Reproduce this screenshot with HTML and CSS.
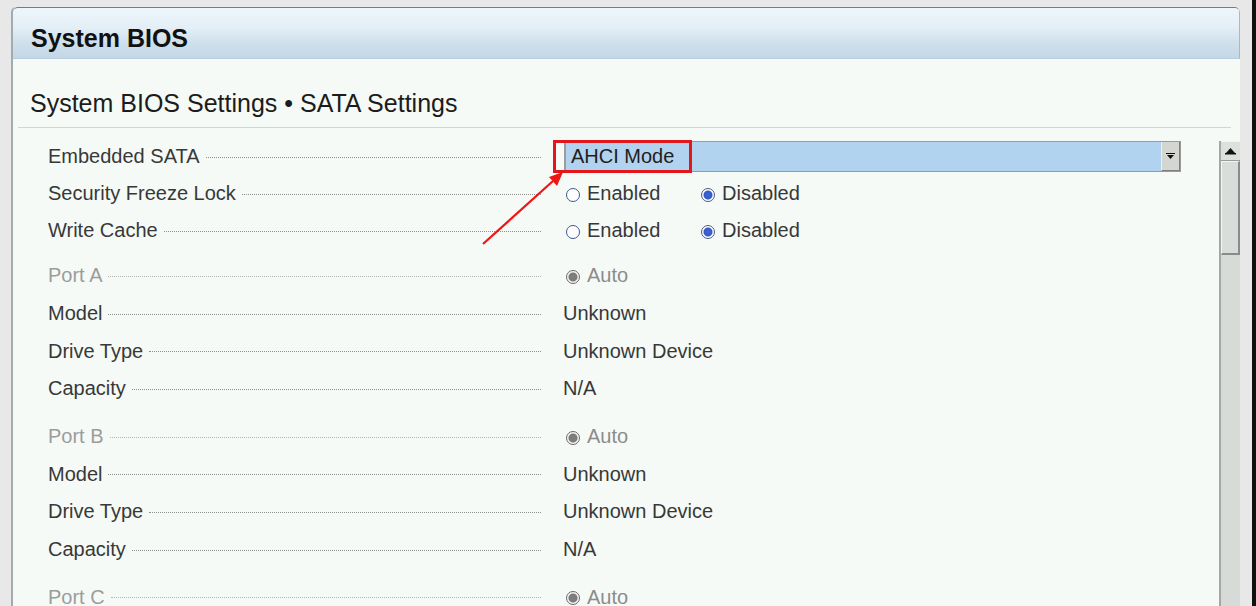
FILE: index.html
```html
<!DOCTYPE html>
<html>
<head>
<meta charset="utf-8">
<link rel="stylesheet" href="styles.css">
</head>
<body>
<div class="screen">
  <div class="frame">
    <div class="panel">
      <div class="panel-head">System BIOS</div>
      <div class="panel-body">
        <div class="subtitle">System BIOS Settings • SATA Settings</div>
        <div class="content">
          <div class="rows">
            <div class="group g-first">
              <div class="row">
                <div class="label"><span>Embedded SATA</span><i class="leader"></i></div>
                <div class="value">
                  <div class="select">
                    <span class="select-text">AHCI Mode</span>
                    <span class="select-btn"><svg width="9" height="7" viewBox="0 0 9 7"><rect x="0" y="0" width="9" height="1" fill="#111"/><polygon points="1,2 8,2 4.5,6" fill="#111"/></svg></span>
                  </div>
                </div>
              </div>
              <div class="row">
                <div class="label"><span>Security Freeze Lock</span><i class="leader"></i></div>
                <div class="value">
                  <span class="radio"><span class="circle"></span>Enabled</span>
                  <span class="radio"><span class="circle on"></span>Disabled</span>
                </div>
              </div>
              <div class="row">
                <div class="label"><span>Write Cache</span><i class="leader"></i></div>
                <div class="value">
                  <span class="radio"><span class="circle"></span>Enabled</span>
                  <span class="radio"><span class="circle on"></span>Disabled</span>
                </div>
              </div>
            </div>

            <div class="group port">
              <div class="row dim">
                <div class="label"><span>Port A</span><i class="leader"></i></div>
                <div class="value"><span class="radio"><span class="circle off"></span>Auto</span></div>
              </div>
              <div class="row">
                <div class="label"><span>Model</span><i class="leader"></i></div>
                <div class="value">Unknown</div>
              </div>
              <div class="row">
                <div class="label"><span>Drive Type</span><i class="leader"></i></div>
                <div class="value">Unknown Device</div>
              </div>
              <div class="row">
                <div class="label"><span>Capacity</span><i class="leader"></i></div>
                <div class="value">N/A</div>
              </div>
            </div>

            <div class="group port">
              <div class="row dim">
                <div class="label"><span>Port B</span><i class="leader"></i></div>
                <div class="value"><span class="radio"><span class="circle off"></span>Auto</span></div>
              </div>
              <div class="row">
                <div class="label"><span>Model</span><i class="leader"></i></div>
                <div class="value">Unknown</div>
              </div>
              <div class="row">
                <div class="label"><span>Drive Type</span><i class="leader"></i></div>
                <div class="value">Unknown Device</div>
              </div>
              <div class="row">
                <div class="label"><span>Capacity</span><i class="leader"></i></div>
                <div class="value">N/A</div>
              </div>
            </div>

            <div class="group port">
              <div class="row dim">
                <div class="label"><span>Port C</span><i class="leader"></i></div>
                <div class="value"><span class="radio"><span class="circle off"></span>Auto</span></div>
              </div>
            </div>
          </div>
          <div class="scrollbar">
            <div class="sb-btn"><svg width="11" height="7" viewBox="0 0 11 7"><polygon points="5.5,0 10,5 1,5" fill="#111"/><rect x="0" y="5" width="11" height="1.5" fill="#111"/></svg></div>
            <div class="sb-thumb"></div>
          </div>
        </div>
      </div>
    </div>
  </div>
  <div class="edge"></div>
</div>
<div class="callout"></div>
<svg class="arrow" width="1256" height="606" viewBox="0 0 1256 606">
  <line x1="483" y1="244" x2="553" y2="181" stroke="#ee1515" stroke-width="2.2"/>
  <polygon points="563,172 549,177 557,186" fill="#ee1515"/>
</svg>
</body>
</html>
```

FILE: styles.css
```css
html, body {
  margin: 0;
  padding: 0;
}
body {
  width: 1256px;
  height: 606px;
  overflow: hidden;
  background: #e8e8e8;
  font-family: "Liberation Sans", Arial, sans-serif;
  position: relative;
}
.screen {
  display: flex;
  height: 606px;
}
.frame {
  flex: 1;
  padding: 7px 12px 0 11px;
  display: flex;
  flex-direction: column;
  min-width: 0;
}
.edge {
  width: 4px;
  background: #111;
}
.panel {
  flex: 1;
  display: flex;
  flex-direction: column;
  border-left: 2px solid #a2abb0;
  border-radius: 5px 5px 0 0;
  overflow: hidden;
  background: #f5faf6;
}
.panel-head {
  height: 52px;
  border-top: 1px solid #6f7f89;
  border-right: 1px solid #a9b8c4;
  border-radius: 5px 5px 0 0;
  background: linear-gradient(#eef6fb 0%, #e3eef6 40%, #cfe0ec 70%, #c4d7e6 100%);
  border-bottom: 1px solid #b9cde0;
  box-sizing: border-box;
  padding: 10px 0 0 18px;
  font-weight: bold;
  font-size: 25px;
  line-height: 40px;
  color: #111;
}
.panel-body {
  flex: 1;
  display: flex;
  flex-direction: column;
  min-height: 0;
}
.subtitle {
  margin: 0 9px 0 5px;
  padding: 29px 0 9px 12px;
  line-height: 30px;
  height: 30px;
  font-size: 25px;
  color: #1c1c1c;
  border-bottom: 1px solid #d3d6d3;
}
.content {
  flex: 1;
  display: flex;
  min-height: 0;
}
.rows {
  flex: 1;
  padding: 10px 0 0 35px;
  font-size: 20px;
  color: #383838;
}
.group.port {
  margin-top: 8px;
}
.group.port + .group.port {
  margin-top: 10px;
}
.row {
  display: flex;
  align-items: center;
  height: 37.7px;
}
.g-first .row {
  height: 37px;
}
.label {
  width: 493px;
  display: flex;
  align-items: center;
  white-space: nowrap;
}
.leader {
  flex: 1;
  margin-left: 6px;
  margin-top: 1px;
  border-bottom: 1px dotted #8f8f8f;
}
.value {
  margin-left: 22px;
  display: flex;
  align-items: center;
  white-space: nowrap;
}
.dim {
  color: #9c9c9c;
}
.dim .leader {
  border-bottom-color: #b4b4b4;
}
.dim .value {
  color: #8c8c8c;
}
.select {
  margin-left: 1px;
  width: 617px;
  height: 31px;
  box-sizing: border-box;
  display: flex;
  border: 1px solid #9a9a9a;
  border-left: 2px solid #9c9c9c;
  background: #b1d3ef;
}
.select-text {
  flex: 1;
  padding-left: 5px;
  line-height: 29px;
  color: #1e1e1e;
}
.select-btn {
  width: 17px;
  display: flex;
  align-items: center;
  justify-content: center;
  background: #d4d6d2;
  border-left: 1px solid #eef0ee;
  border-right: 1px solid #7f7f7f;
  border-bottom: 1px solid #7f7f7f;
}
.radio {
  width: 135px;
  display: flex;
  align-items: center;
}
.circle {
  width: 14px;
  height: 14px;
  box-sizing: border-box;
  border-radius: 50%;
  border: 1px solid #3a5a92;
  background: #fff;
  margin: 2px 7px 0 3px;
}
.circle.on {
  border-color: #4d5a7a;
  background: radial-gradient(circle, #3f66dd 0, #3558c8 4px, #ffffff 5px);
}
.circle.off {
  border-color: #6a6a6a;
  background: radial-gradient(circle, #808080 0, #7a7a7a 4px, #f4f4f4 5px);
}
.scrollbar {
  width: 19px;
  margin-top: 13px;
  border-left: 2px solid #a6a6a6;
  background: #d6dbd7;
  display: flex;
  flex-direction: column;
}
.sb-btn {
  height: 20px;
  box-sizing: border-box;
  display: flex;
  align-items: center;
  justify-content: center;
  background: #dde1dd;
  border-top: 1px solid #f2f4f2;
  border-bottom: 1px solid #9a9a9a;
}
.sb-thumb {
  height: 94px;
  box-sizing: border-box;
  background: #d9ddd9;
  border-top: 1px solid #f4f6f4;
  border-left: 1px solid #f4f6f4;
  border-right: 2px solid #8a8a8a;
  border-bottom: 2px solid #8a8a8a;
}
.callout {
  position: absolute;
  left: 553px;
  top: 140px;
  width: 139px;
  height: 33px;
  box-sizing: border-box;
  border: 3px solid #e3161c;
}
.arrow {
  position: absolute;
  left: 0;
  top: 0;
  pointer-events: none;
}
```
